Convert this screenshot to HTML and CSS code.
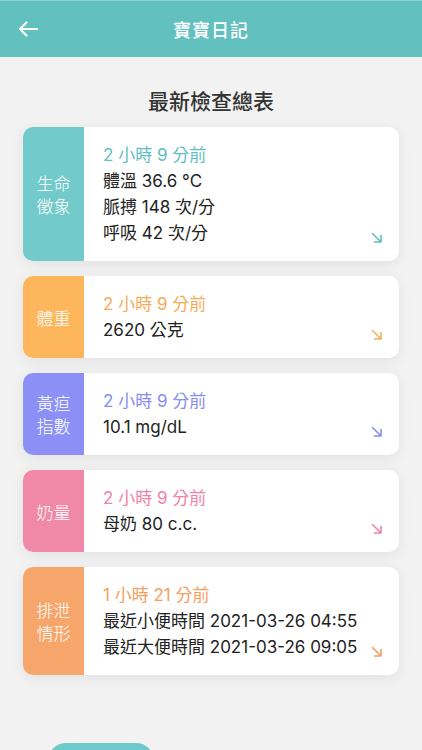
FILE: index.html
```html
<!DOCTYPE html>
<html lang="zh-Hant">
<head>
<meta charset="utf-8">
<title>寶寶日記</title>
<link rel="stylesheet" href="styles.css">
</head>
<body>
<header class="topbar">
  <svg class="back" width="20" height="16" viewBox="0 0 20 16"><path d="M19 8H2M8.5 1.5L2 8l6.5 6.5" fill="none" stroke="#fff" stroke-width="2.2" stroke-linecap="round" stroke-linejoin="round"/></svg>
  <h1 class="topbar-title">寶寶日記</h1>
</header>
<main class="page">
  <h2 class="page-title">最新檢查總表</h2>
  <div class="cards">
    <section class="card teal">
      <div class="label">生命<br>徵象</div>
      <div class="content">
        <div class="time">2 小時 9 分前</div>
        <div class="line">體溫 36.6 °C</div>
        <div class="line">脈搏 148 次/分</div>
        <div class="line">呼吸 42 次/分</div>
      </div>
      <svg class="arrow" width="12" height="12" viewBox="0 0 12 12"><path d="M1.5 1.5L10 10M10 3.5V10H3.5" fill="none" stroke="currentColor" stroke-width="1.6" stroke-linecap="round" stroke-linejoin="round"/></svg>
    </section>
    <section class="card orange">
      <div class="label">體重</div>
      <div class="content">
        <div class="time">2 小時 9 分前</div>
        <div class="line">2620 公克</div>
      </div>
      <svg class="arrow" width="12" height="12" viewBox="0 0 12 12"><path d="M1.5 1.5L10 10M10 3.5V10H3.5" fill="none" stroke="currentColor" stroke-width="1.6" stroke-linecap="round" stroke-linejoin="round"/></svg>
    </section>
    <section class="card purple">
      <div class="label">黃疸<br>指數</div>
      <div class="content">
        <div class="time">2 小時 9 分前</div>
        <div class="line">10.1 mg/dL</div>
      </div>
      <svg class="arrow" width="12" height="12" viewBox="0 0 12 12"><path d="M1.5 1.5L10 10M10 3.5V10H3.5" fill="none" stroke="currentColor" stroke-width="1.6" stroke-linecap="round" stroke-linejoin="round"/></svg>
    </section>
    <section class="card pink">
      <div class="label">奶量</div>
      <div class="content">
        <div class="time">2 小時 9 分前</div>
        <div class="line">母奶 80 c.c.</div>
      </div>
      <svg class="arrow" width="12" height="12" viewBox="0 0 12 12"><path d="M1.5 1.5L10 10M10 3.5V10H3.5" fill="none" stroke="currentColor" stroke-width="1.6" stroke-linecap="round" stroke-linejoin="round"/></svg>
    </section>
    <section class="card peach">
      <div class="label">排泄<br>情形</div>
      <div class="content">
        <div class="time">1 小時 21 分前</div>
        <div class="line">最近小便時間 2021-03-26 04:55</div>
        <div class="line">最近大便時間 2021-03-26 09:05</div>
      </div>
      <svg class="arrow" width="12" height="12" viewBox="0 0 12 12"><path d="M1.5 1.5L10 10M10 3.5V10H3.5" fill="none" stroke="currentColor" stroke-width="1.6" stroke-linecap="round" stroke-linejoin="round"/></svg>
    </section>
  </div>
  <div class="actions">
    <button class="pill">歷史紀錄</button>
  </div>
</main>
</body>
</html>
```
FILE: styles.css
```css
* { box-sizing: border-box; }
html, body { margin: 0; padding: 0; }
body {
  background: #f2f2f2;
  font-family: Inter, "Noto Sans CJK TC", sans-serif;
  color: #222;
  width: 422px;
}
.topbar {
  height: 57px;
  background: #62c0bf;
  border-top: 1px solid #8fd3d2;
  display: flex;
  align-items: center;
  justify-content: center;
  position: relative;
}
.back {
  position: absolute;
  left: 18px;
  top: 20px;
}
.topbar-title {
  margin: 0;
  color: #fff;
  font-family: "Noto Sans CJK TC", sans-serif;
  font-size: 18px;
  font-weight: 500;
  letter-spacing: 1px;
}
.page {
  padding: 28px 23px 0;
}
.page-title {
  margin: 0 0 12px;
  text-align: center;
  font-family: "Noto Sans CJK TC", sans-serif;
  font-size: 21px;
  font-weight: 500;
  line-height: 30px;
  color: #333;
}
.cards {
  display: flex;
  flex-direction: column;
  gap: 15px;
}
.card {
  display: flex;
  background: #fff;
  border-radius: 10px;
  overflow: hidden;
  box-shadow: 0 3px 14px rgba(0, 0, 0, 0.07);
}
.label {
  width: 61px;
  flex: none;
  display: flex;
  align-items: center;
  justify-content: center;
  text-align: center;
  color: #fff;
  font-family: "Noto Sans CJK TC", sans-serif;
  font-weight: 300;
  font-size: 17px;
  line-height: 23px;
}
.content {
  flex: 1;
  padding: 15px 0 15px 19px;
  font-size: 17px;
  line-height: 26px;
}
.time { font-size: 17px; }
.arrow {
  flex: none;
  align-self: flex-end;
  margin: 0 16px 17px 0;
}
.teal .label { background: #72cacb; }
.teal .time, .teal .arrow { color: #5fc0bf; }
.orange .label { background: #fdb65b; }
.orange .time, .orange .arrow { color: #f6ac5b; }
.purple .label { background: #8c90f6; }
.purple .time, .purple .arrow { color: #898df0; }
.pink .label { background: #f088a7; }
.pink .time, .pink .arrow { color: #ee84a3; }
.peach .label { background: #f6a66a; }
.peach .time, .peach .arrow { color: #f3a062; }
.actions {
  padding: 68px 0 20px 25px;
}
.pill {
  width: 106px;
  height: 36px;
  border: none;
  border-radius: 18px;
  background: #6ecac9;
  color: #fff;
  font-family: "Noto Sans CJK TC", sans-serif;
  font-size: 16px;
}
```
